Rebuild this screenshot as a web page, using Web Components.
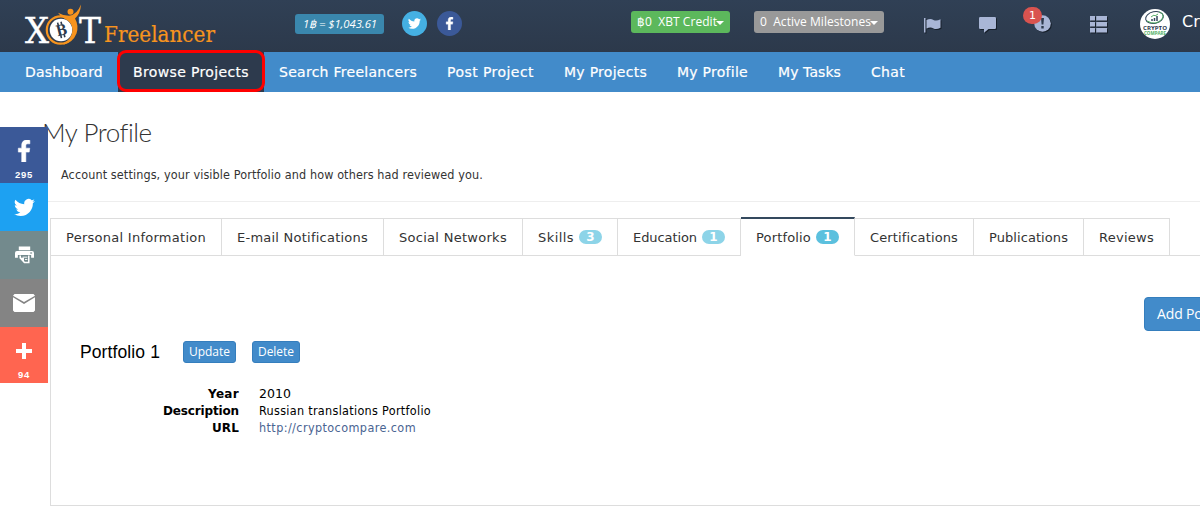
<!DOCTYPE html>
<html lang="en"><head><meta charset="utf-8"><title>My Profile</title>
<style>html,body{margin:0;height:512px;overflow:hidden;background:#fff}body{font-family:"DejaVu Sans",Verdana,sans-serif}</style></head>
<body><profile-page></profile-page>
<script>
const define=(name,html,after)=>customElements.define(name,class extends HTMLElement{
  constructor(){super();this.attachShadow({mode:'open'}).innerHTML=html}
  connectedCallback(){if(after)after(this,this.shadowRoot)}
});

/* One line of text whose tracking is adjusted to occupy the width in "w". */
define('fit-text','<style>:host{display:inline-block;white-space:pre;flex:none}span{display:inline-block}</style><span><slot></slot></span>',(el,root)=>{
  const s=root.querySelector('span'),w=+el.getAttribute('w'),n=el.textContent.length;
  el.style.width=w+'px';
  requestAnimationFrame(()=>{s.style.letterSpacing='0';s.style.letterSpacing=((w-s.getBoundingClientRect().width)/n)+'px'});
});

const shapes={
 facebook:['0 0 24 24','<path d="M14 24V13.2h3.7l.6-4.3H14V6.2c0-1.2.4-2 2.1-2h2.3V.3C18 .2 16.7 0 15.1 0 11.8 0 9.5 2 9.5 5.7v3.2H5.8v4.3h3.700V24z" stroke="currentColor" stroke-width=".6"/>'],
 twitter:['0 0 24 24','<path d="M23.95 4.57a10 10 0 0 1-2.82.77 4.96 4.96 0 0 0 2.16-2.72c-.95.55-2 .96-3.13 1.18a4.92 4.92 0 0 0-8.38 4.49C7.69 8.09 4.07 6.13 1.64 3.16a4.92 4.92 0 0 0 1.52 6.57 4.9 4.9 0 0 1-2.23-.61v.06c0 2.39 1.7 4.38 3.95 4.83a5 5 0 0 1-2.22.08 4.93 4.93 0 0 0 4.6 3.42A9.87 9.87 0 0 1 0 19.54a13.99 13.99 0 0 0 7.55 2.21c9.05 0 14-7.5 14-13.99 0-.21 0-.42-.02-.63a9.94 9.94 0 0 0 2.42-2.56z"/>'],
 print:['0 0 20 18','<path d="M4 0h12v4H4zM2 4.8h16q2 0 2 2V12h-3V9H3v3H0V6.8q0-2 2-2z"/><path d="M5.500 9.500v2.500l4.500 5h4.500V9.500" fill="none" stroke="currentColor" stroke-width="1.600"/><path d="M5 12h4.500v5z"/><path d="M8 11.300h5M10.500 13.700h2.500" stroke="currentColor" stroke-width="1"/><path d="M16 6.300h2v1.200h-2z" fill="#738a8d"/>'],
 mail:['0 0 22 18','<path d="M1.5 0h19L22 1.7 11 8 0 1.7zM0 3.200l11 6.800 11-6.800v13.300L20.500 18h-19L0 16.500z"/>'],
 plus:['0 0 16 16','<path d="M6 0h4v6h6v4h-6v6H6v-6H0V6h6z"/>'],
 flag:['0 0 17 15','<path d="M0 0h1.500v14.500H0zM2.500 2q4-2 7 0 3 1.500 7-.8v8.500q-4 2.300-7 .8-3-2-7 0z"/>'],
 comment:['0 0 17 16','<path d="M0 1.200Q0 0 1.200 0h14.600Q17 0 17 1.200v9.600Q17 12 15.800 12H9.500L5 15.800V12H1.200Q0 12 0 10.800z"/>'],
 alert:['0 0 17 17','<circle cx="8.500" cy="8.500" r="8.300"/><path d="M7 3h3l-.6 6.500H7.600zM7.300 11h2.400v2.400H7.300z" fill="#2d3a4d"/>'],
 list:['0 0 17 17','<path d="M0 0h5v4.500H0zM6.200 0H17v4.500H6.200zM0 6h5v4.500H0zM6.200 6H17v4.500H6.200zM0 12h5v4.500H0zM6.200 12H17v4.500H6.200z"/>']
};
define('ui-icon','<style>:host{display:block;flex:none}svg{display:block;width:100%;height:100%;fill:currentColor}</style><svg></svg>',(el,root)=>{
  const [box,body]=shapes[el.getAttribute('name')],svg=root.querySelector('svg');
  svg.setAttribute('viewBox',box);svg.innerHTML=body;
  el.style.width=el.getAttribute('w')+'px';el.style.height=el.getAttribute('h')+'px';
});

define('site-logo',`<style>:host{display:block;width:192px;height:48px;flex:none}svg{display:block}</style>
<svg width="192" height="48" viewBox="24 0 192 48"><g font-family="DejaVu Serif">
<text x="25" y="43" font-size="35" fill="#fff" stroke="#fff" stroke-width=".4" textLength="24" lengthAdjust="spacingAndGlyphs">X</text>
<text x="79" y="43" font-size="35" fill="#fff" stroke="#fff" stroke-width=".4" textLength="22" lengthAdjust="spacingAndGlyphs">T</text>
<text x="104" y="42" font-size="23" fill="#f7941e" stroke="#f7941e" stroke-width=".2" textLength="111" lengthAdjust="spacingAndGlyphs">Freelancer</text></g>
<circle cx="60.500" cy="30" r="13.700" fill="#2d3a4d" stroke="#f7941e" stroke-width="2.200"/><circle cx="61" cy="30" r="11.300" fill="#fff"/>
<path d="M58 12.800q5 3 11 3 8-1 12-11.300-.5 9-6 14 4 7 1.500 15-3.500 9-13.500 11.500 9.500-7 9.500-15.500-.5-7.500-7.500-10.500-4.500-2-7-6.200z" fill="#f7941e"/><circle cx="70.500" cy="11.800" r="3" fill="#f7941e"/>
<g transform="rotate(-14 61 30)"><text x="56" y="35.500" font-family="DejaVu Serif" font-weight="bold" font-size="15" fill="#2d3a4d" textLength="11" lengthAdjust="spacingAndGlyphs">B</text>
<path d="M59.500 22v3m3.500-3v3m-3.500 10v3m3.500-3v3" stroke="#2d3a4d" stroke-width="1.600"/></g></svg>`);

define('crypto-avatar',`<style>:host{display:block;width:30px;height:30px;flex:none}svg{display:block}</style>
<svg width="30" height="30" viewBox="0 0 30 30"><circle cx="15" cy="15" r="15" fill="#fff"/><ellipse cx="14.500" cy="8.500" rx="9" ry="5.800" fill="none" stroke="#304257" transform="rotate(-12 14.500 8.500)"/><path d="M7 12q9 5 15-2 3-5-3-7" fill="none" stroke="#4fae62"/><path d="M12 10v2m2.500-3v3m2.500-5v5" stroke="#34495e" stroke-width="1.500"/><path d="M11 8l3-2 1 1 3-2" stroke="#55b067" fill="none"/>
<g font-family="Open Sans" font-weight="bold" font-size="5.800"><text x="3" y="21" textLength="24" lengthAdjust="spacingAndGlyphs" fill="#2b394d">CRYPTO</text><text x="4" y="26.300" font-size="5.300" textLength="22" lengthAdjust="spacingAndGlyphs" fill="#4fae62">COMPARE</text></g></svg>`);

define('top-bar',`<style>:host{display:block;height:52px;background:linear-gradient(#304055,#2c394b)}
.row{display:flex;align-items:flex-start;height:52px;width:1250px;box-sizing:border-box;padding-left:24px;color:#fff;font:12px "Open Sans"}
.row>*{flex:none;box-sizing:border-box}
.rate{margin:14px 0 0 79px;width:89px;height:20px;border-radius:3px;background:#3a87ad;padding-left:8px;font:italic 500 11.300px/20px "Open Sans"}
.round{width:25px;height:25px;border-radius:50%;margin-top:11px;display:grid;place-items:center}
.pill{height:22px;margin-top:11px;border-radius:3px;display:flex;align-items:center;padding-left:6px;line-height:20px}
.caret{border:4px solid transparent;border-top-color:#fff;border-bottom:0;margin:1px 0 0 -1px}
.ic{color:#a9b6d6;filter:drop-shadow(1px 1px 0 #17202b)}
.alert{position:relative;margin:15px 0 0 38px}.badge{position:absolute;left:-11px;top:-8px;width:19px;height:17px;border-radius:9px;background:#d9534f;font:11px/17px "DejaVu Sans";text-align:center}</style>
<div class="row"><site-logo></site-logo>
<div class="rate"><fit-text w="74">1฿ = $1,043.61</fit-text></div>
<div class="round" style="margin-left:18px;background:#45b0e3"><ui-icon name="twitter" w="13" h="13"></ui-icon></div>
<div class="round" style="margin-left:10px;background:#3b5998"><ui-icon name="facebook" w="13" h="13"></ui-icon></div>
<div class="pill" style="margin-left:169px;width:99px;background:#5cb85c"><fit-text w="80">฿0  XBT Credit</fit-text><i class="caret"></i></div>
<div class="pill" style="margin-left:24px;width:130px;background:#999"><fit-text w="111">0  Active Milestones</fit-text><i class="caret"></i></div>
<ui-icon class="ic" name="flag" w="17" h="15" style="margin:18px 0 0 40px"></ui-icon>
<ui-icon class="ic" name="comment" w="17" h="16" style="margin:17px 0 0 38px"></ui-icon>
<div class="alert"><ui-icon class="ic" name="alert" w="17" h="17"></ui-icon><span class="badge">1</span></div>
<ui-icon class="ic" name="list" w="17" h="17" style="margin:16px 0 0 39px"></ui-icon>
<crypto-avatar style="margin:9px 0 0 33px"></crypto-avatar><span style="margin:10px 0 0 12px;font:16px/24px 'DejaVu Sans'">Crypto</span></div>`);

define('main-nav',`<style>:host{display:flex;height:40px;background:#428bca;color:#fff;font:14px/40px "DejaVu Sans";padding-left:10px;-webkit-text-stroke:.2px #fff}
div{padding:0 15px}.on{background:#2d3a4d;position:relative;padding:0 15px}.on::after{content:"";position:absolute;left:-1px;top:-2px;width:148px;height:42px;box-sizing:border-box;border:3px solid #f00;border-radius:9px}</style>
<div><fit-text w="78">Dashboard</fit-text></div><div class="on"><fit-text w="116">Browse Projects</fit-text></div><div><fit-text w="138">Search Freelancers</fit-text></div><div><fit-text w="87">Post Project</fit-text></div><div><fit-text w="83">My Projects</fit-text></div><div><fit-text w="71">My Profile</fit-text></div><div><fit-text w="63">My Tasks</fit-text></div><div><fit-text w="34">Chat</fit-text></div>`);

define('share-bar',`<style>:host{position:absolute;left:0;top:127px;width:48px;color:#fff;font:bold 9.500px/10px "Liberation Sans"}
div{height:48px;display:flex;flex-direction:column;align-items:center;justify-content:center;box-sizing:border-box}.tall{height:56px;justify-content:flex-start}</style>
<div class="tall" style="background:#3b5998;padding-top:13px"><ui-icon name="facebook" w="24" h="22"></ui-icon><fit-text w="18" style="margin-top:8px">295</fit-text></div>
<div style="background:#1da1f2;padding-left:1px"><ui-icon name="twitter" w="21" h="21"></ui-icon></div>
<div style="background:#738a8d"><ui-icon name="print" w="19" h="18"></ui-icon></div>
<div style="background:#848484"><ui-icon name="mail" w="22" h="18"></ui-icon></div>
<div class="tall" style="background:#ff6550;padding-top:16px"><ui-icon name="plus" w="16" h="16"></ui-icon><fit-text w="12" style="margin-top:11px">94</fit-text></div>`);

define('tab-item',`<style>:host{display:flex;align-items:center;box-sizing:border-box;height:38px;border:1px solid #ddd;border-left:0;padding-left:15px;color:#333;font:13px "DejaVu Sans"}
:host([active]){background:#fff;border-top:2px solid #34495e;height:39px;border-bottom-color:#fff;margin-top:-1px}
b{display:none;width:23px;height:14px;border-radius:7px;background:#8dd4e8;color:#fff;font:bold 12px/14px "DejaVu Sans";text-align:center;margin-left:5px}:host([count]) b{display:block}:host([active]) b{background:#5bc0de}</style><slot></slot><b></b>`,(el,root)=>{
  root.querySelector('b').textContent=el.getAttribute('count')||'';el.style.width=el.getAttribute('w')+'px';
});

define('ui-button',`<style>:host{display:flex;box-sizing:border-box;flex:none;background:#428bca;border:1px solid #357ebd;border-radius:3px;color:#fff;font:500 12px/19px "Open Sans";height:22px;padding-left:5px;white-space:nowrap}
:host([large]){height:34px;font-size:14px;line-height:32px;border-radius:4px;padding-left:12px}</style><slot></slot>`);

define('portfolio-panel',`<style>:host{display:block;box-sizing:border-box;height:250px;border:1px solid #ddd;border-top:0;width:1200px;color:#000}
.add{display:flex;padding:41px 0 0 1093px}.head{display:flex;align-items:center;padding:10px 0 0 29px;font:17.500px/22px "Liberation Sans"}
dl{display:grid;grid-template-columns:188px 1fr;column-gap:20px;margin:23px 0 0;font:12.500px/17px "DejaVu Sans Condensed","DejaVu Sans"}dt{font:bold 12px/17px "DejaVu Sans";text-align:right;height:17px}dd{margin:-1px 0 1px;height:17px}.wide{font-family:"DejaVu Sans"}.link{color:#4a6492}</style>
<div class="add"><ui-button large><fit-text w="84">Add Portfolio</fit-text></ui-button></div>
<div class="head"><fit-text w="80">Portfolio 1</fit-text><ui-button style="width:53px;margin-left:23px"><fit-text w="41">Update</fit-text></ui-button><ui-button style="width:48px;margin-left:16px"><fit-text w="36">Delete</fit-text></ui-button></div>
<dl><dt><fit-text w="31">Year</fit-text></dt><dd><fit-text w="32" class="wide">2010</fit-text></dd><dt><fit-text w="76">Description</fit-text></dt><dd><fit-text w="172">Russian translations Portfolio</fit-text></dd><dt><fit-text w="27">URL</fit-text></dt><dd class="link"><fit-text w="157">http://cryptocompare.com</fit-text></dd></dl>`);

define('profile-page',`<style>:host{display:block;width:1200px;height:512px;overflow:hidden;position:relative;background:#fff}
h1{margin:0;padding:24px 0 0 42px;font:300 26px/32px Lato;color:#333}.intro{padding:16px 0 0 61px;height:22px;font:12.500px/22px "DejaVu Sans Condensed","DejaVu Sans";color:#333}hr{border:0;border-top:1px solid #eee;margin:15px 0 0}
.content{margin-left:50px}.tabs{display:flex;box-sizing:border-box;height:38px;border-left:1px solid #ddd;margin-top:16px;box-shadow:inset 0 -1px #ddd}</style>
<top-bar></top-bar><main-nav></main-nav><h1><fit-text w="109">My Profile</fit-text></h1><div class="intro"><fit-text w="422">Account settings, your visible Portfolio and how others had reviewed you.</fit-text></div><hr>
<div class="content"><div class="tabs">
<tab-item w="171"><fit-text w="140">Personal Information</fit-text></tab-item><tab-item w="162"><fit-text w="131">E-mail Notifications</fit-text></tab-item><tab-item w="139"><fit-text w="108">Social Networks</fit-text></tab-item><tab-item w="95" count="3"><fit-text w="36">Skills</fit-text></tab-item><tab-item w="123" count="1"><fit-text w="64">Education</fit-text></tab-item><tab-item active w="114" count="1"><fit-text w="55">Portfolio</fit-text></tab-item><tab-item w="119"><fit-text w="88">Certifications</fit-text></tab-item><tab-item w="110"><fit-text w="79">Publications</fit-text></tab-item><tab-item w="86"><fit-text w="55">Reviews</fit-text></tab-item>
</div><portfolio-panel></portfolio-panel></div><share-bar></share-bar>`);
</script></body></html>
